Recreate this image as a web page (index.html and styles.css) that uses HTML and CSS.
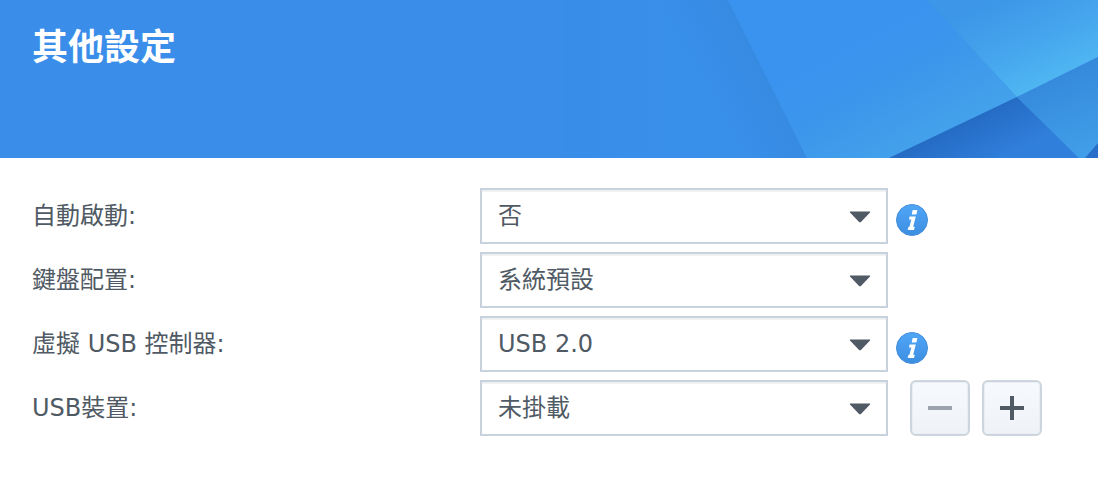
FILE: index.html
```html
<!DOCTYPE html>
<html lang="zh-Hant">
<head>
  <meta charset="UTF-8" />
  <meta name="viewport" content="width=device-width, initial-scale=1" />
  <title>其他設定</title>
  <link rel="stylesheet" href="styles.css">
</head>
<body>

  <!-- shared icons -->
  <svg class="defs" width="0" height="0" aria-hidden="true">
    <defs>
      <linearGradient id="infoFill" x1="0" y1="0" x2="0" y2="1">
        <stop offset="0" stop-color="#51a6f8" />
        <stop offset="1" stop-color="#3c8de0" />
      </linearGradient>
      <symbol id="arrow" viewBox="0 0 22 12">
        <path d="M1.5 0.5h19q1.2 0 .5 1l-8.8 9.2q-1.2 1.1-2.4 0L1 1.5q-.7-1 .5-1z" fill="#505a64" />
      </symbol>
      <symbol id="info" viewBox="0 0 32 32">
        <circle cx="16" cy="16" r="15.5" fill="url(#infoFill)" stroke="#4690dc" />
        <path d="M17.2 6h3.6q.6 0 .5.6l-.8 3.4q-.2.6-.8.6h-3.4q-.6 0-.5-.6l.7-3.4q.1-.6.7-.6zM13.6 12.4h6.2l-2.6 10.4h1.6l-.8 3.2h-5.4q-1 0-.8-1l.5-1.8 1.2-.8 1.8-7h-2.3z" fill="#fff" />
      </symbol>
    </defs>
  </svg>

  <!-- HEADER -->
  <header class="banner">
    <h1 class="title">其他設定</h1>
    <svg class="banner-art" viewBox="0 0 534 158" aria-hidden="true">
      <defs>
        <linearGradient id="left" gradientUnits="userSpaceOnUse" x1="0" y1="0" x2="150" y2="0">
          <stop offset="0" stop-color="#388de9" />
          <stop offset="1" stop-color="#3990eb" />
        </linearGradient>
        <linearGradient id="shade" gradientUnits="userSpaceOnUse" x1="139" y1="92" x2="204" y2="60">
          <stop offset="0" stop-color="#3688e0" stop-opacity="0" />
          <stop offset="1" stop-color="#378adf" />
        </linearGradient>
        <linearGradient id="middle" gradientUnits="userSpaceOnUse" x1="300" y1="40" x2="360" y2="150">
          <stop offset="0" stop-color="#3a93ef" />
          <stop offset="0.4" stop-color="#3c96eb" />
          <stop offset="1" stop-color="#44a2eb" />
        </linearGradient>
        <linearGradient id="cyan" gradientUnits="userSpaceOnUse" x1="430" y1="0" x2="470" y2="88">
          <stop offset="0" stop-color="#3d96e8" />
          <stop offset="0.55" stop-color="#45a5ed" />
          <stop offset="1" stop-color="#4fb6f2" />
        </linearGradient>
        <linearGradient id="dark" gradientUnits="userSpaceOnUse" x1="400" y1="121" x2="422" y2="166">
          <stop offset="0" stop-color="#256bc4" />
          <stop offset="1" stop-color="#307fdb" />
        </linearGradient>
        <linearGradient id="right" gradientUnits="userSpaceOnUse" x1="490" y1="78" x2="520" y2="158">
          <stop offset="0" stop-color="#368adc" />
          <stop offset="1" stop-color="#419fe9" />
        </linearGradient>
      </defs>
      <rect width="534" height="158" fill="url(#left)" />
      <path d="M95 0h69l79 158h-69z" fill="url(#shade)" />
      <path d="M164 0h199l90 97-128 61h-82z" fill="url(#middle)" />
      <path d="M363 0h171v57l-81 40z" fill="url(#cyan)" />
      <path d="M453 97l62 61H325z" fill="url(#dark)" />
      <path d="M453 97l81-40v101h-19z" fill="url(#right)" />
      <path d="M534 143v15h-13z" fill="#276fc8" />
    </svg>
  </header>

  <!-- SETTINGS -->
  <form class="settings">
    <div class="row">
      <label class="label" for="autostart">自動啟動:</label>
      <div class="select-box">
        <select class="select" id="autostart">
          <option selected>否</option>
        </select>
        <svg class="arrow" aria-hidden="true"><use href="#arrow" /></svg>
      </div>
      <svg class="info" aria-hidden="true"><use href="#info" /></svg>
    </div>

    <div class="row">
      <label class="label" for="keyboard">鍵盤配置:</label>
      <div class="select-box">
        <select class="select" id="keyboard">
          <option selected>系統預設</option>
        </select>
        <svg class="arrow" aria-hidden="true"><use href="#arrow" /></svg>
      </div>
    </div>

    <div class="row">
      <label class="label" for="controller">虛擬 USB 控制器:</label>
      <div class="select-box">
        <select class="select" id="controller">
          <option selected>USB 2.0</option>
        </select>
        <svg class="arrow" aria-hidden="true"><use href="#arrow" /></svg>
      </div>
      <svg class="info" aria-hidden="true"><use href="#info" /></svg>
    </div>

    <div class="row">
      <label class="label" for="device">USB裝置:</label>
      <div class="select-box">
        <select class="select" id="device">
          <option selected>未掛載</option>
        </select>
        <svg class="arrow" aria-hidden="true"><use href="#arrow" /></svg>
      </div>
      <div class="buttons">
        <button class="btn" type="button" aria-label="-" disabled>
          <svg class="btn-icon" viewBox="0 0 24 24" aria-hidden="true"><path d="M0 10h24v4H0z" fill="#9da3ac" /></svg>
        </button>
        <button class="btn" type="button" aria-label="+">
          <svg class="btn-icon" viewBox="0 0 24 24" aria-hidden="true"><path d="M10 0h4v10h10v4H14v10h-4V14H0v-4h10z" fill="#505a64" /></svg>
        </button>
      </div>
    </div>
  </form>

</body>
</html>
```
FILE: styles.css
```css
* {
  box-sizing: border-box;
}
body {
  margin: 0;
  background: #fff;
  color: #505a64;
  font-family: "DejaVu Sans", "Noto Sans CJK TC", sans-serif;
  font-size: 24px;
  line-height: 32px;
}
.defs {
  position: absolute;
}

/* Header */
.banner {
  display: flex;
  justify-content: space-between;
  background: #3a8ee9;
  overflow: hidden;
}
.title {
  margin: 0;
  padding: 20px 32px;
  color: #fff;
  font-family: "Noto Sans CJK TC", sans-serif;
  font-size: 36px;
  font-weight: bold;
  line-height: 48px;
  white-space: nowrap;
}
.banner-art {
  flex: none;
  width: 534px;
  height: 158px;
}

/* Settings */
.settings {
  display: flex;
  flex-direction: column;
  gap: 8px;
  padding: 30px 32px;
}
.row {
  display: grid;
  grid-template-columns: 448px 1fr 178px;
  align-items: center;
}
.select-box {
  position: relative;
}
.select {
  display: block;
  width: 100%;
  height: 56px;
  padding: 0 48px 0 16px;
  border: 2px solid #c8d2dc;
  border-radius: 0;
  background: #fff;
  box-shadow: inset 0 2px #f0f1f2;
  color: inherit;
  font: inherit;
  appearance: none;
}
.arrow {
  position: absolute;
  top: 23px;
  right: 17px;
  width: 22px;
  height: 12px;
  pointer-events: none;
}
.info {
  width: 32px;
  height: 32px;
  margin: 8px 0 0 8px;
}
.buttons {
  display: flex;
  gap: 12px;
  padding-left: 22px;
}
.btn {
  display: flex;
  align-items: center;
  justify-content: center;
  width: 60px;
  height: 56px;
  padding: 0;
  border: 2px solid #cdd6df;
  border-radius: 6px;
  background: linear-gradient(#f6f9fe, #eff2f7);
  box-shadow: inset 0 0 0 1px #e9eef3;
}
.btn-icon {
  width: 24px;
  height: 24px;
}
```
